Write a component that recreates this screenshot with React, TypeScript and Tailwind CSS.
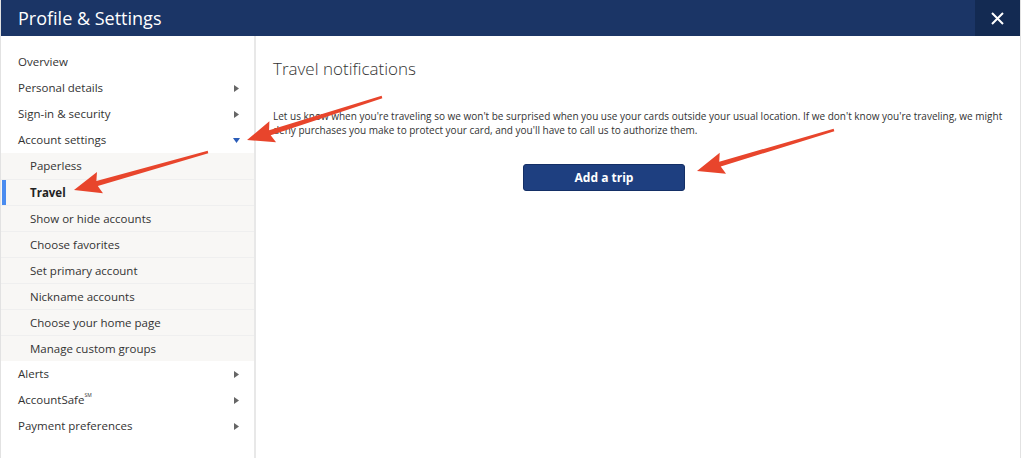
import React from "react";

type Item = { label: React.ReactNode; arrow?: "right" | "down" };

const topItems: Item[] = [
    { label: "Overview" },
    { label: "Personal details", arrow: "right" },
    { label: "Sign-in & security", arrow: "right" },
    { label: "Account settings", arrow: "down" },
];

const subItems = [
    "Paperless",
    "Travel",
    "Show or hide accounts",
    "Choose favorites",
    "Set primary account",
    "Nickname accounts",
    "Choose your home page",
    "Manage custom groups",
];

const bottomItems: Item[] = [
    { label: "Alerts", arrow: "right" },
    {
        label: (
            <>
                AccountSafe<sup className="text-[5px] align-super">SM</sup>
            </>
        ),
        arrow: "right",
    },
    { label: "Payment preferences", arrow: "right" },
];

// annotation arrows: [tailX, tailY, tipX, tipY]
const arrows: [number, number, number, number][] = [
    [382, 97, 247, 140],
    [208, 152, 74, 190],
    [834, 130, 697, 171],
];

function arrowPoints(x1: number, y1: number, x2: number, y2: number) {
    const dx = x2 - x1;
    const dy = y2 - y1;
    const len = Math.hypot(dx, dy);
    const ux = dx / len;
    const uy = dy / len;
    const px = -uy;
    const py = ux;
    const headLen = 24;
    const headW = 11;
    const shaftTail = 1.2;
    const shaftHead = 2.6;
    const bx = x2 - ux * headLen;
    const by = y2 - uy * headLen;
    const pts = [
        [x1 + px * shaftTail, y1 + py * shaftTail],
        [bx + px * shaftHead, by + py * shaftHead],
        [bx + px * headW - ux * 3, by + py * headW - uy * 3],
        [x2, y2],
        [bx - px * headW - ux * 3, by - py * headW - uy * 3],
        [bx - px * shaftHead, by - py * shaftHead],
        [x1 - px * shaftTail, y1 - py * shaftTail],
    ];
    return pts.map((p) => p.join(",")).join(" ");
}

const Chevron: React.FC<{ dir: "right" | "down" }> = ({ dir }) =>
    dir === "right" ? (
        <svg width="5" height="7" viewBox="0 0 5 7" className="ml-auto mr-[15px]">
            <path d="M0 0 L5 3.5 L0 7 Z" fill="#666" />
        </svg>
    ) : (
        <svg width="7" height="5" viewBox="0 0 7 5" className="ml-auto mr-[14px]">
            <path d="M0 0 L7 0 L3.5 5 Z" fill="#2a5cb8" />
        </svg>
    );

const NavRow: React.FC<{ item: Item }> = ({ item }) => (
    <div className="h-[26px] flex items-center pl-[17px] text-[11.5px] text-[#333]">
        <span>{item.label}</span>
        {item.arrow && <Chevron dir={item.arrow} />}
    </div>
);

export default function App() {
    return (
        <div
            className="relative w-[1024px] h-[458px] bg-white overflow-hidden"
            style={{ fontFamily: '"Open Sans", "Noto Sans", sans-serif' }}
        >
            <div className="w-[1021px] h-full flex flex-col border-r border-l border-[#e2e2e2]">
                {/* header */}
                <div className="h-9 flex bg-[#1b3566] shrink-0">
                    <h1 className="flex-1 flex items-center pl-[17px] text-[18px] text-white">Profile &amp; Settings</h1>
                    <button className="w-[45px] h-full flex items-center justify-center bg-[#132a52]">
                        <svg width="13" height="13" viewBox="0 0 13 13">
                            <path d="M1 1 L12 12 M12 1 L1 12" stroke="white" strokeWidth="2" />
                        </svg>
                    </button>
                </div>

                <div className="flex flex-1">
                    {/* sidebar */}
                    <div className="w-[255px] border-r-2 border-[#e8e8e8] pt-[13px]">
                        {topItems.map((it, i) => (
                            <NavRow key={i} item={it} />
                        ))}
                        <div className="bg-[#f8f7f5]">
                            {subItems.map((s, i) => (
                                <div
                                    key={s}
                                    className={`h-[26px] flex items-center text-[11.5px] text-[#333] ${
                                        i > 0 ? "border-t border-[#efefef]" : ""
                                    }`}
                                >
                                    <div className={`w-1 h-full ml-px ${s === "Travel" ? "bg-[#4a8cf0]" : ""}`} />
                                    <span className={`pl-[24px] ${s === "Travel" ? "font-bold text-[#222]" : ""}`}>{s}</span>
                                </div>
                            ))}
                        </div>
                        {bottomItems.map((it, i) => (
                            <NavRow key={i} item={it} />
                        ))}
                    </div>

                    {/* content */}
                    <div className="flex-1 pl-[17px] pr-3 pt-[21px]">
                        <h2 className="text-[17px] font-light text-[#333] leading-6">Travel notifications</h2>
                        <p className="mt-[28px] text-[10px] leading-[14px] text-[#333]">
                            Let us know when you're traveling so we won't be surprised when you use your cards outside your usual
                            location. If we don't know you're traveling, we might deny purchases you make to protect your card, and
                            you'll have to call us to authorize them.
                        </p>
                        <button className="mt-[27px] ml-[250px] w-[162px] h-[27px] rounded-[3px] bg-[#1e3f80] border border-[#142f66] text-white text-[12px] font-bold">
                            Add a trip
                        </button>
                    </div>
                </div>
            </div>

            {/* annotation arrows */}
            <svg className="absolute inset-0 pointer-events-none" width="1024" height="458">
                {arrows.map((a, i) => (
                    <polygon key={i} points={arrowPoints(...a)} fill="#e8452c" />
                ))}
            </svg>
        </div>
    );
}
